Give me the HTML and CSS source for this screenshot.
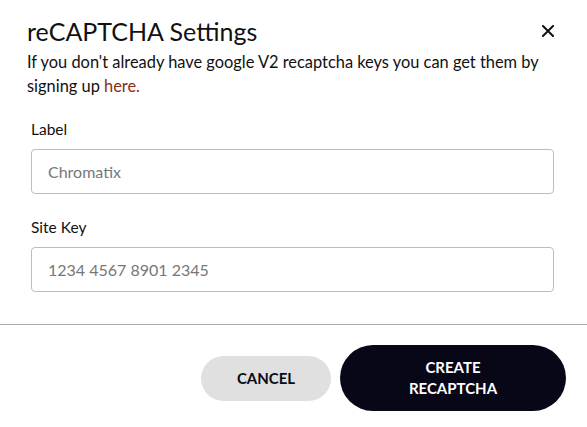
FILE: index.html
```html
<!DOCTYPE html>
<html lang="en">
<head>
    <meta charset="UTF-8">
    <meta name="viewport" content="width=device-width, initial-scale=1.0">
    <title>reCAPTCHA Settings</title>
    <link rel="stylesheet" href="styles.css">
</head>
<body>
    <div class="dialog">
        <div class="dialog-header">
            <h1>reCAPTCHA Settings</h1>
            <button class="close" type="button" aria-label="Close">
                <svg width="12" height="12" viewBox="0 0 12 12">
                    <path d="M1 1 L11 11 M11 1 L1 11" stroke="#111" stroke-width="2" stroke-linecap="square"/>
                </svg>
            </button>
        </div>
        <p class="intro">If you don't already have google V2 recaptcha keys you can get them by signing up <a href="#">here.</a></p>

        <form class="fields">
            <div class="field">
                <label for="label">Label</label>
                <input type="text" id="label" placeholder="Chromatix">
            </div>
            <div class="field">
                <label for="siteKey">Site Key</label>
                <input type="text" id="siteKey" placeholder="1234 4567 8901 2345">
            </div>
        </form>

        <div class="dialog-footer">
            <button type="button" class="btn btn-cancel">Cancel</button>
            <button type="button" class="btn btn-create">Create<br>reCAPTCHA</button>
        </div>
    </div>
</body>
</html>
```

FILE: styles.css
```css
body {
    margin: 0;
    background-color: #ffffff;
    color: #111111;
    font-family: Lato, "Noto Sans", sans-serif;
}

.dialog {
    padding-top: 16px;
}

.dialog-header {
    display: flex;
    align-items: center;
    justify-content: space-between;
    padding: 0 33px 0 27px;
}

h1 {
    margin: 0;
    font-size: 25px;
    font-weight: 400;
    line-height: 30px;
}

.close {
    border: none;
    background: none;
    padding: 0;
    cursor: pointer;
    display: flex;
}

.intro {
    margin: 4px 0 0;
    padding: 0 27px;
    font-size: 16.4px;
    line-height: 24px;
}

.intro a {
    color: #8b2a1a;
    text-decoration: none;
}

.fields {
    padding: 21px 33px 0 31px;
}

.field {
    margin-bottom: 23px;
}

label {
    display: block;
    font-size: 15.5px;
    line-height: 20px;
    margin-bottom: 10px;
}

input[type="text"] {
    width: 100%;
    height: 45px;
    box-sizing: border-box;
    padding: 0 16px;
    border: 1px solid #bdbdbd;
    border-radius: 4px;
    font-family: inherit;
    font-size: 16px;
    color: #111;
}

input::placeholder {
    color: #777;
}

.dialog-footer {
    margin-top: 32px;
    border-top: 1px solid #aaaaaa;
    display: flex;
    justify-content: flex-end;
    align-items: center;
    gap: 9px;
    padding: 20px 21px 0 0;
}

.btn {
    border: none;
    border-radius: 999px;
    font-family: inherit;
    font-size: 15px;
    font-weight: 700;
    text-transform: uppercase;
    cursor: pointer;
    line-height: 21px;
}

.btn-cancel {
    width: 130px;
    height: 45px;
    background-color: #e0e0e0;
    color: #0a0a14;
}

.btn-create {
    width: 226px;
    height: 66px;
    background-color: #070717;
    color: #ffffff;
}
```
